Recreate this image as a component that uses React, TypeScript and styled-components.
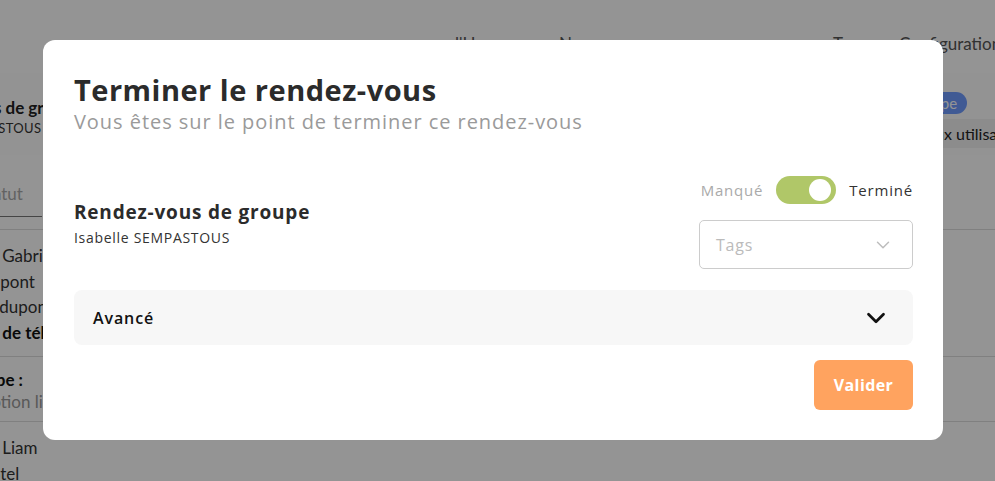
import styled, { createGlobalStyle } from "styled-components"
import { ChevronDown } from "lucide-react"

const GlobalStyle = createGlobalStyle`
  body {
    margin: 0;
    font-family: Lato, "Open Sans", sans-serif;
    color: #333;
  }
`

export default function App() {
  return (
    <>
      <GlobalStyle />
      <Page>
        <TopNav>
          <NavItem>l'Heure</NavItem>
          <NavItem>Nom</NavItem>
          <NavItem>Type</NavItem>
          <NavItem>Configuration</NavItem>
        </TopNav>
        <Summary>
          <SummaryInfo>
            <SummaryTitle>Rendez-vous de groupe</SummaryTitle>
            <SummaryName>Isabelle SEMPASTOUS</SummaryName>
          </SummaryInfo>
          <SummarySide>
            <Badge>Groupe</Badge>
            <Access>Accès aux utilisateurs</Access>
          </SummarySide>
        </Summary>
        <Filter>
          <FilterInput>Statut</FilterInput>
        </Filter>
        <Entry>
          <Line>M. Gabriel</Line>
          <Line>Dupont</Line>
          <Line>ga.dupont@gmail.com</Line>
          <Line bold>N° de téléphone</Line>
        </Entry>
        <Entry dense>
          <Line bold>Type :</Line>
          <Line muted>Option libre</Line>
        </Entry>
        <Entry>
          <Line>M. Liam</Line>
          <Line>Hôtel</Line>
        </Entry>
      </Page>

      <Overlay>
        <Modal>
          <Title>Terminer le rendez-vous</Title>
          <Subtitle>Vous êtes sur le point de terminer ce rendez-vous</Subtitle>

          <Body>
            <Info>
              <InfoTitle>Rendez-vous de groupe</InfoTitle>
              <InfoName>Isabelle SEMPASTOUS</InfoName>
            </Info>
            <Controls>
              <ToggleRow>
                <ToggleLabel>Manqué</ToggleLabel>
                <Switch checked>
                  <Knob />
                </Switch>
                <ToggleLabel active>Terminé</ToggleLabel>
              </ToggleRow>
              <Select>
                <Placeholder>Tags</Placeholder>
                <ChevronDown size={22} color="#bdbdbd" strokeWidth={1.6} />
              </Select>
            </Controls>
          </Body>

          <Accordion>
            <AccordionLabel>Avancé</AccordionLabel>
            <ChevronDown size={30} color="#111" strokeWidth={2.2} />
          </Accordion>

          <Footer>
            <SubmitButton>Valider</SubmitButton>
          </Footer>
        </Modal>
      </Overlay>
    </>
  )
}

/* background page, seen through the overlay */

const Page = styled.div`
  height: 100vh;
  overflow: hidden;
  background: #fff;
  display: flex;
  flex-direction: column;
  & > * {
    flex-shrink: 0;
  }
`

const TopNav = styled.div`
  height: 73px;
  box-sizing: border-box;
  padding: 33px 0 0 455px;
  display: grid;
  grid-template-columns: 104px 274px 66px auto;
  font-size: 17px;
  color: #555;
  white-space: nowrap;
  overflow: hidden;
`

const NavItem = styled.span``

const Summary = styled.div`
  height: 82px;
  box-sizing: border-box;
  padding-top: 19px;
  display: flex;
  justify-content: space-between;
  align-items: flex-start;
  background: #fdfdfd;
  overflow: hidden;
`

const SummaryInfo = styled.div`
  margin: 5px 0 0 -96px;
  display: flex;
  flex-direction: column;
  gap: 2px;
  white-space: nowrap;
`

const SummaryTitle = styled.span`
  font-size: 17px;
  font-weight: 700;
  color: #222;
`

const SummaryName = styled.span`
  font-size: 13px;
  letter-spacing: 0.4px;
  color: #333;
`

const SummarySide = styled.div`
  width: 115px;
  display: flex;
  flex-direction: column;
  align-items: flex-start;
  gap: 5px;
  white-space: nowrap;
`

const Badge = styled.span`
  margin-left: 18px;
  padding: 2px 10px;
  border-radius: 12px;
  background: #6f9bff;
  color: #fff;
  font-size: 15px;
`

const Access = styled.span`
  width: 100%;
  padding: 5px 0 5px 2px;
  background: #f2f2f2;
  font-size: 16px;
  color: #222;
`

const Filter = styled.div`
  height: 75px;
  box-sizing: border-box;
  padding-bottom: 12px;
  display: flex;
  align-items: flex-end;
  border-bottom: 1px solid #ddd;
`

const FilterInput = styled.div`
  margin-left: -22px;
  width: 64px;
  padding: 8px 0 12px;
  border-bottom: 1px solid #777;
  font-size: 17px;
  color: #aaa;
`

const Entry = styled.div<{ dense?: boolean }>`
  display: flex;
  flex-direction: column;
  padding: ${({ dense }) => (dense ? "12px 0 8px" : "13px 0 11px")};
  border-bottom: 1px solid #ddd;
  white-space: nowrap;
  line-height: ${({ dense }) => (dense ? "22px" : "25.5px")};
`

const Line = styled.span<{ bold?: boolean; muted?: boolean }>`
  margin-left: -22px;
  font-size: 17px;
  font-weight: ${({ bold }) => (bold ? 700 : 400)};
  color: ${({ muted, bold }) => (muted ? "#999" : bold ? "#111" : "#333")};
`

/* modal */

const Overlay = styled.div`
  position: fixed;
  inset: 0;
  background: rgba(0, 0, 0, 0.42);
  display: flex;
  align-items: flex-start;
  padding: 40px 0 0 43px;
  font-family: "Open Sans", Lato, sans-serif;
`

const Modal = styled.div`
  width: 900px;
  height: 400px;
  box-sizing: border-box;
  padding: 32px 30px 30px 31px;
  background: #fff;
  border-radius: 12px;
  display: flex;
  flex-direction: column;
`

const Title = styled.h2`
  margin: 0;
  font-size: 29px;
  line-height: 36px;
  font-weight: 700;
  letter-spacing: 0.5px;
  color: #2b2b2b;
`

const Subtitle = styled.p`
  margin: 2px 0 0;
  font-size: 20px;
  line-height: 24px;
  letter-spacing: 0.95px;
  color: #9a9a9a;
`

const Body = styled.div`
  margin-top: 42px;
  display: flex;
  justify-content: space-between;
  align-items: center;
`

const Info = styled.div`
  display: flex;
  flex-direction: column;
  gap: 3px;
`

const InfoTitle = styled.span`
  font-size: 19px;
  font-weight: 700;
  letter-spacing: 0.8px;
  color: #2b2b2b;
`

const InfoName = styled.span`
  font-size: 14px;
  letter-spacing: 0.7px;
  color: #333;
`

const Controls = styled.div`
  display: flex;
  flex-direction: column;
  align-items: flex-end;
  gap: 16px;
`

const ToggleRow = styled.div`
  display: flex;
  align-items: center;
  gap: 13px;
`

const ToggleLabel = styled.span<{ active?: boolean }>`
  font-size: 15px;
  letter-spacing: 0.8px;
  color: ${({ active }) => (active ? "#333" : "#aaa")};
`

const Switch = styled.div<{ checked?: boolean }>`
  width: 60px;
  height: 28px;
  box-sizing: border-box;
  padding: 0 5px;
  border-radius: 14px;
  background: ${({ checked }) => (checked ? "#b0c768" : "#ddd")};
  display: flex;
  align-items: center;
  justify-content: ${({ checked }) => (checked ? "flex-end" : "flex-start")};
`

const Knob = styled.span`
  width: 22px;
  height: 22px;
  border-radius: 50%;
  background: #fff;
`

const Select = styled.div`
  width: 214px;
  height: 49px;
  box-sizing: border-box;
  padding: 0 18px 0 16px;
  border: 1px solid #ccc;
  border-radius: 5px;
  display: flex;
  align-items: center;
  justify-content: space-between;
`

const Placeholder = styled.span`
  font-size: 16px;
  letter-spacing: 0.8px;
  color: #bbb;
`

const Accordion = styled.div`
  margin-top: 21px;
  height: 55px;
  box-sizing: border-box;
  padding: 0 22px 0 19px;
  border-radius: 8px;
  background: #f7f7f7;
  display: flex;
  align-items: center;
  justify-content: space-between;
`

const AccordionLabel = styled.span`
  font-size: 16px;
  font-weight: 600;
  letter-spacing: 0.9px;
  color: #111;
`

const Footer = styled.div`
  margin-top: 15px;
  display: flex;
  justify-content: flex-end;
`

const SubmitButton = styled.button`
  width: 99px;
  height: 50px;
  border: none;
  border-radius: 6px;
  background: #ffa35f;
  color: #fff;
  font-family: inherit;
  font-size: 16px;
  font-weight: 700;
  letter-spacing: 0.4px;
`
